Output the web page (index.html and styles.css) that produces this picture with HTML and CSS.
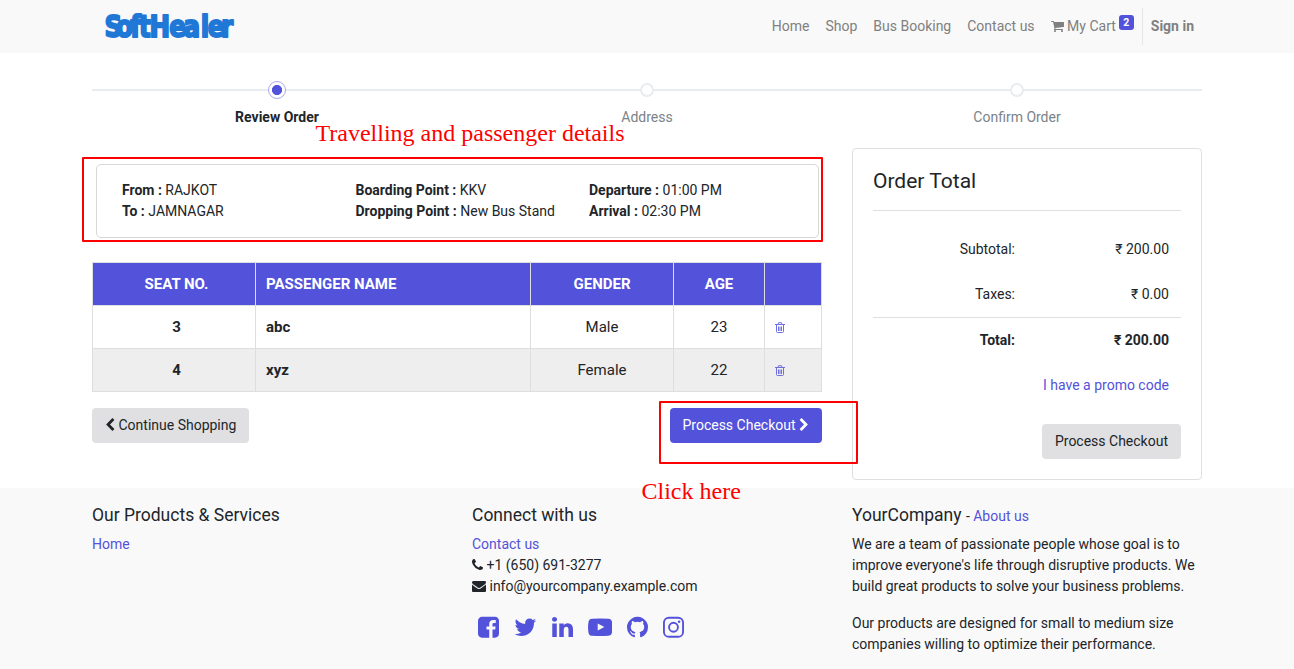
FILE: index.html
```html
<!DOCTYPE html>
<html lang="en">
<head>
<meta charset="utf-8">
<title>Review Order</title>
<link rel="stylesheet" href="styles.css">
</head>
<body>
<header class="navbar">
  <div class="container nav-inner">
    <svg class="logo" width="132" height="36" viewBox="0 0 132 36" aria-label="SoftHealer">
      <text class="logo-text" transform="scale(.82 1)" y="29.500" x="3 17 34.500 45 58 82 99.500 120.500 129 145">SoftHealer</text>
    </svg>
    <nav class="nav-links">
      <a>Home</a><a>Shop</a><a>Bus Booking</a><a>Contact us</a>
      <a class="cart"><svg class="icon" width="13" height="14" viewBox="64 0 1664 1792"><path d="M704 1536q0 52-38 90t-90 38-90-38-38-90 38-90 90-38 90 38 38 90zm896 0q0 52-38 90t-90 38-90-38-38-90 38-90 90-38 90 38 38 90zm128-1088v512q0 24-16.500 42.500t-40.500 21.500l-1044 122q13 60 13 70 0 16-24 64h920q26 0 45 19t19 45-19 45-45 19h-1024q-26 0-45-19t-19-45q0-11 8-31.500t16-36 21.500-40 15.500-29.500l-177-823h-204q-26 0-45-19t-19-45 19-45 45-19h256q16 0 28.500 6.500t19.500 15.500 13 24.500 8 26 5.500 29.500 4.500 26h1201q26 0 45 19t19 45z"/></svg> My Cart<sup class="badge">2</sup></a>
      <a class="signin">Sign in</a>
    </nav>
  </div>
</header>

<main class="container">
  <div class="wizard">
    <div class="step active"><span class="dot"></span><span>Review Order</span></div>
    <div class="step"><span class="dot"></span><span>Address</span></div>
    <div class="step"><span class="dot"></span><span>Confirm Order</span></div>
  </div>

  <div class="columns">
    <section class="order">
      <div class="trip">
        <div><b>From :</b> RAJKOT<br><b>To :</b> JAMNAGAR</div>
        <div><b>Boarding Point :</b> KKV<br><b>Dropping Point :</b> New Bus Stand</div>
        <div><b>Departure :</b> 01:00 PM<br><b>Arrival :</b> 02:30 PM</div>
      </div>
      <table class="seats">
        <colgroup><col class="c-seat"><col class="c-name"><col class="c-gender"><col class="c-age"><col class="c-del"></colgroup>
        <thead><tr><th class="seat">SEAT NO.</th><th class="name">PASSENGER NAME</th><th>GENDER</th><th>AGE</th><th></th></tr></thead>
        <tbody>
          <tr><td class="seat"><b>3</b></td><td class="name"><b>abc</b></td><td>Male</td><td>23</td><td class="name"><svg class="trash" width="10" height="11" viewBox="0 0 10 11"><path d="M0 2.500h10M3 2.300l.6-1.600h2.800l.6 1.600M1.500 2.700v6.800q0 1 1 1h5q1 0 1-1V2.700M3.500 4.500v4.500M5 4.500v4.500M6.500 4.500v4.500"/></svg></td></tr>
          <tr><td class="seat"><b>4</b></td><td class="name"><b>xyz</b></td><td>Female</td><td>22</td><td class="name"><svg class="trash" width="10" height="11" viewBox="0 0 10 11"><path d="M0 2.500h10M3 2.300l.6-1.600h2.800l.6 1.600M1.500 2.700v6.800q0 1 1 1h5q1 0 1-1V2.700M3.500 4.500v4.500M5 4.500v4.500M6.500 4.500v4.500"/></svg></td></tr>
        </tbody>
      </table>
      <div class="actions">
        <a class="btn"><svg class="icon" width="10" height="14" viewBox="256 0 1280 1792"><path d="M1427 301l-531 531 531 531q19 19 19 45t-19 45l-166 166q-19 19-45 19t-45-19l-742-742q-19-19-19-45t19-45l742-742q19-19 45-19t45 19l166 166q19 19 19 45t-19 45z"/></svg> Continue Shopping</a>
        <a class="btn primary">Process Checkout <svg class="icon" width="10" height="14" viewBox="256 0 1280 1792"><path d="M1363 877l-742 742q-19 19-45 19t-45-19l-166-166q-19-19-19-45t19-45l531-531-531-531q-19-19-19-45t19-45l166-166q19-19 45-19t45 19l742 742q19 19 19 45t-19 45z"/></svg></a>
      </div>
    </section>

    <aside class="card">
      <h4>Order Total</h4>
      <div class="totals">
        <div class="row"><span>Subtotal:</span><span>₹ 200.00</span></div>
        <div class="row"><span>Taxes:</span><span>₹ 0.00</span></div>
        <div class="row total"><span>Total:</span><span>₹ 200.00</span></div>
        <div class="promo"><a>I have a promo code</a></div>
      </div>
      <div class="checkout"><a class="btn">Process Checkout</a></div>
    </aside>
  </div>
</main>

<footer class="footer">
  <div class="container footer-inner">
    <div>
      <h5>Our Products &amp; Services</h5>
      <a>Home</a>
    </div>
    <div>
      <h5>Connect with us</h5>
      <div><a>Contact us</a></div>
      <div><svg class="icon" width="11" height="14" viewBox="192 0 1408 1792"><path d="M1600 1240q0 27-10 70.500t-21 68.500q-21 50-122 106-94 51-186 51-27 0-53-3.500t-57.500-12.500-47-14.500-55.500-20.500-49-18q-98-35-175-83-127-79-264-216t-216-264q-48-77-83-175-3-9-18-49t-20.500-55.500-14.500-47-12.500-57.500-3.500-53q0-92 51-186 56-101 106-122 25-11 68.500-21t70.500-10q14 0 21 3 18 6 53 76 11 19 30 54t35 63.500 31 53.500q3 4 17.500 25t21.500 35.500 7 28.500q0 20-28.500 50t-62 55-62 53-28.500 46q0 9 5 22.500t8.500 20.500 14 24 11.500 19q76 137 174 235t235 174q2 1 19 11.500t24 14 20.500 8.500 22.500 5q18 0 46-28.500t53-62 55-62 50-28.500q14 0 28.500 7t35.500 21.500 25 17.500q25 15 53.500 31t63.500 35 54 30q70 35 76 53 3 7 3 21z"/></svg> +1 (650) 691-3277</div>
      <div><svg class="icon" width="14" height="14" viewBox="0 0 1792 1792"><path d="M1792 710v794q0 66-47 113t-113 47h-1472q-66 0-113-47t-47-113v-794q44 49 101 87 362 246 497 345 57 42 92.500 65.500t94.500 48 110 24.500h2q51 0 110-24.500t94.500-48 92.500-65.500q170-123 498-345 57-39 100-87zm0-294q0 79-49 151t-122 123q-376 261-468 325-10 7-42.500 31t-54 38.500-52 32.500-57.500 27-50 9h-2q-23 0-50-9t-57.500-27-52-32.500-54-38.500-42.500-31q-91-64-262-182.500t-205-142.500q-62-42-117-115.500t-55-136.500q0-78 41.500-130t118.500-52h1472q65 0 112.500 47t47.500 113z"/></svg> info@yourcompany.example.com</div>
      <div class="social">
        <svg width="21" height="24.5" viewBox="128 0 1536 1792"><path d="M1376 128q119 0 203.500 84.500t84.500 203.500v960q0 119-84.500 203.500t-203.500 84.500h-188v-595h199l30-232h-229v-148q0-56 23.500-84t91.500-28l122-1v-207q-63-9-178-9-136 0-217.500 80t-81.500 226v171h-200v232h200v595h-532q-119 0-203.500-84.500t-84.500-203.500v-960q0-119 84.500-203.500t203.500-84.500h960z"/></svg>
        <svg width="22.75" height="24.5" viewBox="64 0 1664 1792"><path d="M1684 408q-67 98-162 167 1 14 1 42 0 130-38 259.500t-115.500 248.500-184.500 210.500-258 146-323 54.500q-271 0-496-145 35 4 78 4 225 0 401-138-105-2-188-64.500t-114-159.500q33 5 61 5 43 0 85-11-112-23-185.500-111.500t-73.500-205.500v-4q68 38 146 41-66-44-105-115t-39-154q0-88 44-163 121 149 294.500 238.500t371.500 99.500q-8-38-8-74 0-134 94.500-228.500t228.500-94.500q140 0 236 102 109-21 205-78-37 115-142 178 93-10 186-50z"/></svg>
        <svg width="21" height="24.5" viewBox="128 0 1536 1792"><path d="M477 625v991h-330v-991h330zm21-306q1 73-50.500 122t-135.500 49h-2q-82 0-132-49t-50-122q0-74 51.500-122.500t134.500-48.500 133 48.500 51 122.500zm1166 729v568h-329v-530q0-105-40.500-164.500t-126.500-59.500q-63 0-105.500 34.500t-63.500 85.500q-11 30-11 81v553h-329q2-399 2-647t-1-296l-1-48h329v144h-2q20-32 41-56t56.500-52 87-43.500 114.500-15.500q171 0 275 113.500t104 332.500z"/></svg>
        <svg width="24.5" height="24.5" viewBox="0 0 1792 1792"><path fill-rule="evenodd" d="M300 266Q896 230 1492 266Q1710 280 1750 480Q1830 896 1750 1312Q1710 1512 1492 1526Q896 1562 300 1526Q82 1512 42 1312Q-38 896 42 480Q82 280 300 266zM711 1128l484-250-484-253z"/></svg>
        <svg width="21" height="24.5" viewBox="128 0 1536 1792"><path d="M896 128q209 0 385.500 103t279.500 279.500 103 385.500q0 251-146.500 451.500t-378.500 277.500q-27 5-40-7t-13-30q0-3 .5-76.500t.5-134.500q0-97-52-142 57-6 102.500-18t94-39 81-66.500 53-105 20.500-150.500q0-119-79-206 37-91-8-204-28-9-81 11t-92 44l-38 24q-93-26-192-26t-192 26q-16-11-42.500-27t-83.500-38.500-85-13.500q-45 113-8 204-79 87-79 206 0 85 20.500 150t52.500 105 80.500 67 94 39 102.500 18q-39 36-49 103-21 10-45 15t-57 5-65.500-21.500-55.500-62.500q-19-32-48.500-52t-49.500-24l-20-3q-21 0-29 4.500t-5 11.500 9 14 13 12l7 5q22 10 43.500 38t31.500 51l10 23q13 38 44 61.500t67 30 69.500 7 55.500-3.500l23-4q0 38 .5 88.500t.5 54.500q0 18-13 30t-40 7q-232-77-378.500-277.500t-146.500-451.500q0-209 103-385.500t279.500-279.500 385.500-103z"/></svg>
        <svg width="21" height="24.5" viewBox="128 0 1536 1792"><rect x="197" y="197" width="1398" height="1398" rx="360" fill="none" stroke="currentColor" stroke-width="138"/><circle cx="896" cy="896" r="325" fill="none" stroke="currentColor" stroke-width="138"/><circle cx="1306" cy="486" r="92"/></svg>
      </div>
    </div>
    <div>
      <h5 class="company">YourCompany <small>- <a>About us</a></small></h5>
      <p>We are a team of passionate people whose goal is to improve everyone's life through disruptive products. We build great products to solve your business problems.</p>
      <p>Our products are designed for small to medium size companies willing to optimize their performance.</p>
    </div>
  </div>
</footer>

<div class="mark mark-trip"></div>
<div class="mark mark-checkout"></div>
<div class="note note-trip">Travelling and passenger details</div>
<div class="note note-checkout">Click here</div>
</body>
</html>
```
FILE: styles.css
```css
* { box-sizing: border-box; }
body {
  margin: 0;
  height: 669px;
  position: relative;
  overflow: hidden;
  font: 14px/21px Roboto, "Liberation Sans", sans-serif;
  color: #212529;
  background: #fff;
}
a { color: #5352da; }
b, th { font-weight: 700; }
h4, h5, p { margin: 0; font-weight: 400; }
svg { fill: currentColor; }
.container { width: 1110px; margin: 0 auto; }
.icon { vertical-align: -2px; }

.navbar { height: 53px; background: #f9f9f9; }
.nav-inner { display: flex; justify-content: space-between; align-items: flex-start; padding: 8px 0 0 10px; }
.logo { display: block; overflow: visible; }
.logo-text {
  font: 700 30px "DejaVu Sans", Roboto, sans-serif;
  fill: #1f77d6;
  stroke: #1f77d6;
  stroke-width: 2px;
  stroke-linejoin: round;
}
.nav-links { display: flex; }
.nav-links a { height: 37px; padding: 8px; color: #808080; white-space: nowrap; }
.nav-links .signin { border-left: 1px solid #e6e6e6; padding-left: 8px; font-weight: 700; }
.badge {
  display: inline-block;
  width: 15px;
  height: 15px;
  margin-left: 3px;
  border-radius: 3px;
  background: #5352da;
  color: #fff;
  font-size: 10.5px;
  font-weight: 700;
  line-height: 15px;
  text-align: center;
  vertical-align: 5px;
}
.nav-links .cart { padding-top: 7px; line-height: 19px; }

.wizard { display: grid; grid-template-columns: repeat(3, 1fr); height: 95px; padding-top: 27px;
  background: linear-gradient(#e9ecef, #e9ecef) 0 36px / 100% 2px no-repeat; }
.step { display: flex; flex-direction: column; align-items: center; gap: 7px; color: #7b8288; }
.dot { width: 14px; height: 14px; margin: 3px 0; border: 2px solid #e9ecef; border-radius: 50%; background: #fff; }
.active { color: #212529; font-weight: 700; }
.active .dot { width: 18px; height: 18px; margin: 1px 0; border: 1px solid #a9a8ec; background: radial-gradient(circle, #5352da 4.7px, #fff 5.4px); }

.columns { display: grid; grid-template-columns: 730px 350px; gap: 30px; height: 340px; align-items: start; }
.trip { display: grid; grid-template-columns: 233.5px 233.5px 1fr; margin: 16px 3px 0 4px; height: 74px; padding: 15px 25px; border: 1px solid #d5d7da; border-radius: 5px; }
.seats { width: 730px; margin-top: 24px; border-collapse: collapse; table-layout: fixed; font-size: 15px; text-align: center; }
.c-seat { width: 163px; }
.c-name { width: 275px; }
.c-gender { width: 143px; }
.c-age { width: 91px; }
.c-del { width: 57px; }
.seats th, .seats td { height: 43px; padding: 0 10px; border: 1px solid #dedede; }
.seats th { background: #5352da; color: #fff; }
.seats .seat { padding-left: 15px; }
.seats .name { text-align: left; }
.seats tbody tr:nth-child(2) { background: #eee; }
.trash { fill: none; stroke: #6f6edf; stroke-width: 1; vertical-align: -1px; }
.actions { display: flex; justify-content: space-between; margin-top: 16px; }
.btn { display: inline-block; height: 35px; padding: 7px 13px; border-radius: 4px; background: #e0e0e2; color: #212529; white-space: nowrap; }
.primary { padding: 7px 13px 7px 12px; background: #5352da; color: #fff; }

.card { height: 332px; padding: 20px; border: 1px solid #dfdfdf; border-radius: 4px; }
.card h4 { height: 42px; font-size: 21px; line-height: 24px; border-bottom: 1px solid #dfdfdf; }
.totals { padding-top: 16px; }
.row { display: grid; grid-template-columns: 154px 154px; padding: 12px 0; height: 45px; text-align: right; }
.row span { padding-right: 12px; }
.total { height: 46px; border-top: 1px solid #dfdfdf; font-weight: 700; }
.promo { padding: 12px 12px 0 0; text-align: right; }
.checkout { padding-top: 28px; text-align: right; }

.footer { height: 181px; background: #f9f9f9; }
.footer-inner { display: grid; grid-template-columns: 350px 350px 350px; gap: 30px; padding-top: 17px; }
.footer h5 { margin-bottom: 8px; font-size: 17.5px; line-height: 21px; }
.footer .company { margin-bottom: 7px; }
.footer small { font-size: 14px; }
.footer p { margin-bottom: 16px; }
.social { display: flex; gap: 15px; padding: 18px 0 0 6px; color: #5352da; }

.mark { position: absolute; border: 2px solid #f00; border-radius: 1px; }
.mark-trip { left: 82px; top: 157px; width: 741px; height: 85px; }
.mark-checkout { left: 659px; top: 401px; width: 199px; height: 63px; }
.note { position: absolute; color: #f00; font: 24px/28px "Liberation Serif", serif; white-space: nowrap; }
.note-trip { left: 315.5px; top: 119px; }
.note-checkout { left: 641.5px; top: 477px; }
```
